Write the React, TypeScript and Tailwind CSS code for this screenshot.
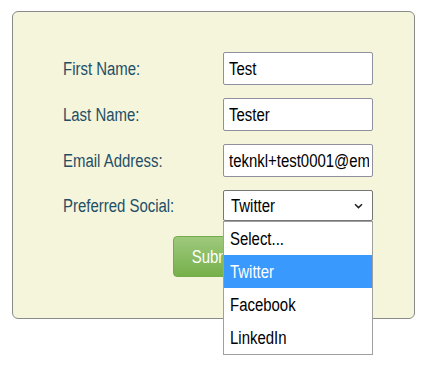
import type { ReactNode } from 'react';

const fields = [
  { label: 'First Name:', value: 'Test' },
  { label: 'Last Name:', value: 'Tester' },
  { label: 'Email Address:', value: 'teknkl+test0001@email.com' },
];

const options = ['Select...', 'Twitter', 'Facebook', 'LinkedIn'];

// Arial Narrow is not installed, so squeeze Liberation Sans to its width
function Narrow({ children, center }: { children: ReactNode; center?: boolean }) {
  return (
    <span className={`inline-block whitespace-nowrap scale-x-[0.83] ${center ? 'origin-center' : 'origin-left'}`}>
      {children}
    </span>
  );
}

export default function App() {
  return (
    <div className="w-[429px] h-[374px] bg-white pt-[11px] pl-[12px] font-['Liberation_Sans',Arial,sans-serif] text-[18px] leading-none">
      <form className="w-[403px] h-[308px] bg-[#f5f5dc] border border-[#8a8a8a] rounded-[6px] pt-[40px] pl-[50px]">
        <div className="flex flex-col gap-[13px]">
          {fields.map((f) => (
            <div key={f.label} className="flex items-center">
              <label className="w-[160px] text-[#1e4f66]">
                <Narrow>{f.label}</Narrow>
              </label>
              <div className="w-[150px] h-[33px] bg-white border border-[#8f8f9d] rounded-[2px] pl-[5px] pr-[3px] flex items-center text-black">
                <div className="w-full overflow-hidden">
                  <Narrow>{f.value}</Narrow>
                </div>
              </div>
            </div>
          ))}
          <div className="flex items-center">
            <label className="w-[160px] text-[#1e4f66]">
              <Narrow>Preferred Social:</Narrow>
            </label>
            <div className="relative">
              <div className="w-[150px] h-[31px] bg-white border border-[#767676] rounded-[2px] pl-[7px] pr-[9px] flex items-center justify-between text-black">
                <Narrow>Twitter</Narrow>
                <svg width="9" height="6" viewBox="0 0 9 6" className="mt-[1px]">
                  <path d="M1 1.2 L4.5 4.6 L8 1.2" fill="none" stroke="#222" strokeWidth="1.5" />
                </svg>
              </div>
              <ul className="absolute left-0 top-[31px] z-10 w-[150px] bg-white border border-[#a0a0a0] text-black">
                {options.map((o) => (
                  <li
                    key={o}
                    className={`h-[33px] flex items-center pl-[6px] ${o === 'Twitter' ? 'bg-[#3999fd] text-white' : ''}`}
                  >
                    <Narrow>{o}</Narrow>
                  </li>
                ))}
              </ul>
            </div>
          </div>
        </div>
        <div className="flex mt-[15px] pl-[110px]">
          <button
            type="button"
            className="w-[84px] h-[41px] rounded-[4px] bg-gradient-to-b from-[#9dc97c] to-[#77b04a] border border-[#76ab4c] text-white"
          >
            <Narrow center>Submit</Narrow>
          </button>
        </div>
      </form>
    </div>
  );
}
